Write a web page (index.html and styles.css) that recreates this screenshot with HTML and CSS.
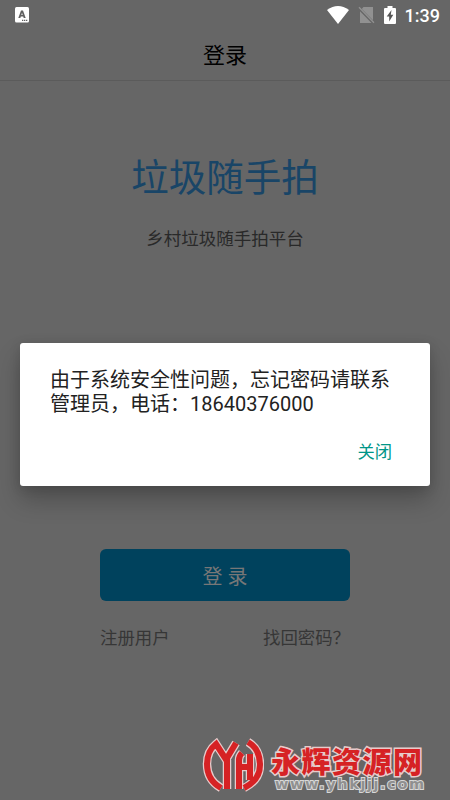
FILE: index.html
```html
<!DOCTYPE html>
<html lang="zh-CN">
<head>
<meta charset="utf-8">
<title>登录</title>
<link rel="stylesheet" href="styles.css">
</head>
<body>
<div class="screen">
  <header class="status">
    <svg class="ime" width="14" height="16" viewBox="0 0 14 16"><rect width="14" height="15.500" rx="1.500" fill="#fff"/><path d="M3.300 11 6 3.500h2l2.700 7.500H8.700l-.5-1.500H5.800L5.300 11zM6.300 8h1.400L7 5.800z" fill="#606060" fill-rule="evenodd"/><path d="M7 13.400h1.300M9 13.400h1.300M11 13.400h1.300" stroke="#606060" stroke-width="1.100"/></svg>
    <div class="indicators">
      <svg width="22" height="18" viewBox="0 0 22 18"><path d="M0 4Q11-4 22 4L11 18Z" fill="#fff"/></svg>
      <svg width="17" height="18" viewBox="0 0 17 18"><path d="M5.500 1H15V14.200L3.800 3ZM2 5.200 13.500 17H2Z" fill="#919191"/><path d="M1 1.200 16 16.700" stroke="#919191" stroke-width="1.300"/></svg>
      <svg width="12" height="18" viewBox="0 0 12 18"><path d="M3.500 0h5v2H11q1 0 1 1v14q0 1-1 1H1q-1 0-1-1V3q0-1 1-1h2.500Z" fill="#fff"/><path d="M7.500 4 2.700 10.500h2.500V15.500L9.300 8.800H6.800Z" fill="#555"/></svg>
      <span class="clock">1:39</span>
    </div>
  </header>
  <h1 class="title">登录</h1>
  <main class="content">
    <h2 class="brand">垃圾随手拍</h2>
    <p class="subtitle">乡村垃圾随手拍平台</p>
    <div class="form">
      <button class="login">登 录</button>
      <nav class="links"><a>注册用户</a><a>找回密码？</a></nav>
    </div>
  </main>
  <section class="dialog" role="dialog">
    <p class="message">由于系统安全性问题，忘记密码请联系<br>管理员，电话：18640376000</p>
    <div class="actions"><button class="close">关闭</button></div>
  </section>
  <div class="watermark">
    <svg width="62" height="58" viewBox="0 0 62 58">
      <defs><path id="mark" d="M19 52Q5 44 5 28Q5 15 14 8L25 25M34 7L25 22V53M37 53V24Q37 20 40 17M37 31H48M48 18V44M46 6Q58 13 58 29Q58 44 42 52"/></defs>
      <g fill="none">
        <use href="#mark" stroke="#e6cccc" stroke-width="8.500"/>
        <use href="#mark" stroke="#d62224" stroke-width="6"/>
      </g>
    </svg>
    <div class="site"><strong>永辉资源网</strong><span>www.yhkjjj.com</span></div>
  </div>
</div>
</body>
</html>
```
FILE: styles.css
```css
* { box-sizing: border-box; }
body { margin: 0; font-family: Roboto, "Noto Sans CJK SC", sans-serif; }
h1, h2, p { margin: 0; font-weight: 400; }
button { border: 0; padding: 0; background: none; font: inherit; }
.screen { position: relative; width: 450px; height: 800px; background: #666; overflow: hidden; }
.status { display: flex; justify-content: space-between; align-items: center; height: 30px; padding: 0 10px 0 15px; }
.indicators { display: flex; align-items: center; }
.indicators svg { margin-right: 9px; }
.clock { color: #fff; font-size: 18px; font-weight: 500; line-height: 30px; padding-top: 2px; }
.title { height: 51px; border-bottom: 1px solid #5b5b5b; font-size: 22px; line-height: 52px; text-align: center; color: #000; }
.content { display: flex; flex-direction: column; align-items: center; }
.brand { margin-top: 69px; font-size: 37.5px; line-height: 56px; color: #194567; }
.subtitle { margin-top: 20px; font-size: 17.5px; line-height: 26px; color: #292929; }
.form { width: 250px; margin-top: 297px; }
.login { display: block; width: 100%; height: 52px; border-radius: 6px; background: #00425d; color: #777; font-size: 20px; }
.links { display: flex; justify-content: space-between; margin-top: 24px; font-size: 17.4px; line-height: 26px; color: #363636; }
.dialog { position: absolute; left: 20px; top: 343px; width: 410px; height: 143px; padding: 25px 30px 0; background: #fff; border-radius: 3px; box-shadow: 0 14px 24px rgba(0,0,0,.24), 0 2px 12px rgba(0,0,0,.12); }
.message { font-size: 20px; line-height: 24px; color: #222; white-space: nowrap; }
.actions { display: flex; justify-content: flex-end; padding: 23px 8px 0 0; }
.close { font-size: 17.3px; line-height: 26px; color: #009688; }
.watermark { position: absolute; left: 202px; top: 736px; display: flex; }
.site { display: flex; flex-direction: column; margin-left: 7px; }
.site strong { margin-top: 9px; font: 900 29px/30px "Noto Sans CJK SC", sans-serif; letter-spacing: 1.5px; color: #d62224; -webkit-text-stroke: 3px #e6cccc; paint-order: stroke fill; white-space: nowrap; }
.site span { margin: 2px 0 0 4px; font: bold 14.5px/15px "DejaVu Sans", "Liberation Sans", sans-serif; letter-spacing: 1.6px; color: #909090; -webkit-text-stroke: 2px #d8d8d8; paint-order: stroke fill; white-space: nowrap; }
```
